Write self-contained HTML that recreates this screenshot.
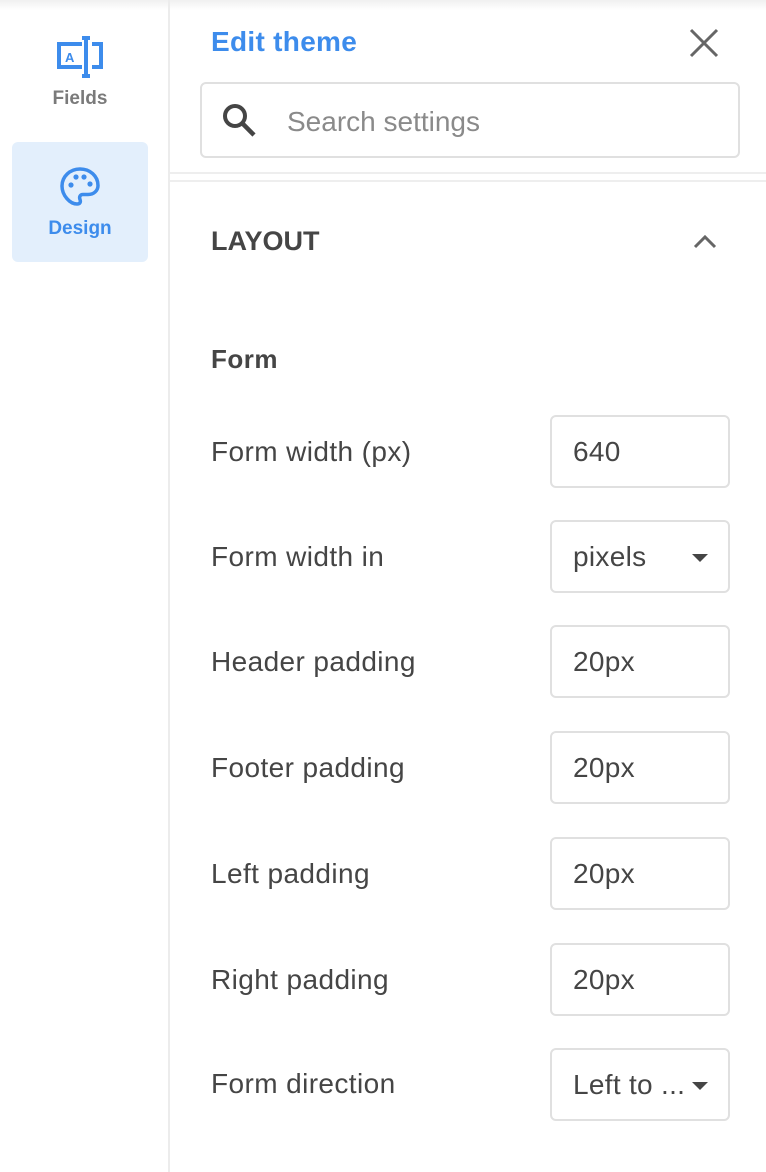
<!DOCTYPE html>
<html><head><meta charset="utf-8"><style>
*{box-sizing:border-box;margin:0;padding:0}
body{width:766px;height:1172px;background:#fff;font-family:"Liberation Sans",sans-serif;color:#454545;position:relative;overflow:hidden}
.side{position:absolute;left:0;top:0;width:170px;height:1172px;border-right:2px solid #ececec}
.topshadow{position:absolute;left:0;top:0;width:766px;height:10px;background:linear-gradient(#f0f0f0,#fff)}
.fields{position:absolute;left:0;top:36px;width:160px;text-align:center;font-weight:bold;font-size:19px;color:#7a7a7a}
.design{position:absolute;left:12px;top:142px;width:136px;height:120px;background:#e3effc;border-radius:6px;text-align:center;color:#3d8cec;font-weight:bold;font-size:19px}
.title{position:absolute;left:211px;top:26px;font-size:28px;letter-spacing:0.3px;font-weight:bold;color:#3d8cec}
.close{position:absolute;left:688px;top:27px}
.search{position:absolute;left:200px;top:82px;width:540px;height:76px;border:2px solid #e0e0e0;border-radius:6px}
.search span{position:absolute;left:85px;top:22px;font-size:28px;color:#8a8a8a}
.sep{position:absolute;left:170px;width:596px;height:2px;background:#eee}
.layout{position:absolute;left:211px;top:226px;font-size:27px;font-weight:bold;color:#454545}
.form{position:absolute;left:211px;top:344px;font-size:26px;font-weight:bold;letter-spacing:0.5px}
.lbl{position:absolute;left:211px;font-size:28px;letter-spacing:0.4px;color:#454545}
.inp{position:absolute;left:550px;width:180px;height:73px;border:2px solid #e0e0e0;border-radius:6px;font-size:28px;letter-spacing:0.3px;padding:19px 0 0 21px}
.tri{position:absolute;right:20px;top:32px;width:0;height:0;border-left:8px solid transparent;border-right:8px solid transparent;border-top:8px solid #454545}
</style></head><body>
<div class="topshadow"></div>
<div class="side">
 <div class="fields">
  <svg width="52" height="42" viewBox="0 0 52 42" style="display:block;margin:0 0 8px 55px"><path d="M27 8H4v23h23" fill="none" stroke="#3d8cec" stroke-width="4"/><path d="M37 8h9v23h-9" fill="none" stroke="#3d8cec" stroke-width="4"/><path d="M27 2h8M31 2v38M27 40h8" stroke="#3d8cec" stroke-width="4" fill="none"/><text x="10" y="26" font-size="13" font-weight="bold" fill="#3d8cec" font-family="Liberation Sans">A</text></svg>
  <div style="margin-top:10px">Fields</div></div>
</div>
<div class="design">
 <svg width="42" height="42" viewBox="0 0 42 42" style="display:block;margin:24px auto 10px"><path d="M21 3C11 3 3 10.5 3 20s8 18 15 18c3 0 4-2 3-4.5s0-5 3-5h5c6 0 10-4 10-9C39 10 31 3 21 3z" fill="none" stroke="#3d8cec" stroke-width="3.5"/><circle cx="12" cy="19" r="2.6" fill="#3d8cec"/><circle cx="17" cy="11" r="2.6" fill="#3d8cec"/><circle cx="25" cy="11" r="2.6" fill="#3d8cec"/><circle cx="31" cy="18" r="2.6" fill="#3d8cec"/></svg>
 Design</div>
<div class="title">Edit theme</div>
<svg class="close" width="32" height="32" viewBox="0 0 32 32"><path d="M3 3L29 29M29 3L3 29" stroke="#666" stroke-width="3"/></svg>
<div class="search">
 <svg width="40" height="40" viewBox="0 0 40 40" style="position:absolute;left:18px;top:17px"><circle cx="15" cy="15" r="10" fill="none" stroke="#454545" stroke-width="4"/><path d="M22 22L34 34" stroke="#454545" stroke-width="4.5"/></svg>
 <span>Search settings</span></div>
<div class="sep" style="top:172px"></div>
<div class="sep" style="top:180px"></div>
<div class="layout">LAYOUT</div>
<svg width="30" height="20" viewBox="0 0 30 20" style="position:absolute;left:692px;top:232px"><path d="M3 15L13 5L23 15" fill="none" stroke="#666" stroke-width="3"/></svg>
<div class="form">Form</div>
<div class="lbl" style="top:436px">Form width (px)</div><div class="inp" style="top:415px">640</div>
<div class="lbl" style="top:541px">Form width in</div><div class="inp" style="top:520px">pixels<div class="tri"></div></div>
<div class="lbl" style="top:646px">Header padding</div><div class="inp" style="top:625px">20px</div>
<div class="lbl" style="top:752px">Footer padding</div><div class="inp" style="top:731px">20px</div>
<div class="lbl" style="top:858px">Left padding</div><div class="inp" style="top:837px">20px</div>
<div class="lbl" style="top:964px">Right padding</div><div class="inp" style="top:943px">20px</div>
<div class="lbl" style="top:1068px">Form direction</div><div class="inp" style="top:1048px">Left to ...<div class="tri"></div></div>
</body></html>
